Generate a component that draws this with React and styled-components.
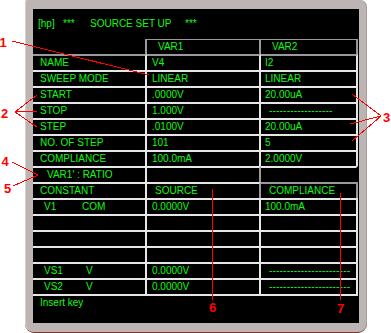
import React from 'react';
import styled, { createGlobalStyle } from 'styled-components';

const GREEN = '#12fa12';
const WHITE = '#e6e6e6';
const GRAY = '#9a9a9a';
const RED = '#ff0000';

const Global = createGlobalStyle`
  html, body { margin: 0; padding: 0; background: #ffffff; }
  body { font-family: "Liberation Sans", Arial, sans-serif; }
`;

const Page = styled.div`
  position: relative;
  width: 391px;
  height: 333px;
  overflow: hidden;
  padding-left: 25px;
  box-sizing: border-box;
`;

const Bezel = styled.div`
  width: 342px;
  height: 333px;
  box-sizing: border-box;
  padding: 9px 8px 10px 8px;
  background: #bdb4b4;
  border-radius: 2px 7px 9px 9px;
  border-bottom: 1px solid #7a3434;
  box-shadow: inset 1px 0 0 #d6d0d0, inset -1px 0 0 #a89e9e;
`;

const Screen = styled.div`
  width: 326px;
  height: 314px;
  background: #000;
  display: flex;
  flex-direction: column;
  color: ${GREEN};
  font-size: 10px;
`;

const Title = styled.div`
  height: 30px;
  box-sizing: border-box;
  padding: 9px 0 0 5px;
  display: flex;
  line-height: 12px;
  white-space: pre;
`;

const TitlePart = styled.span`
  width: ${p => (p.$w ? `${p.$w}px` : 'auto')};
`;

const Grid = styled.div`
  display: grid;
  grid-template-columns: 114px 114px 97px;
  grid-template-rows: 15px repeat(15, 16px);
`;

const borderTop = p => {
  if (p.$top === 'none') return '0';
  if (p.$top === 'thin') return `1px solid ${GRAY}`;
  return `2px solid ${p.$top === 'gray' ? GRAY : WHITE}`;
};

const borderRight = p => {
  if (p.$right === 'none') return '2px solid transparent';
  return `2px solid ${p.$right === 'gray' ? GRAY : WHITE}`;
};

const Cell = styled.div`
  box-sizing: border-box;
  border-top: ${borderTop};
  border-right: ${borderRight};
  padding-left: ${p => p.$pad ?? 0}px;
  line-height: 14px;
  white-space: pre;
  overflow: hidden;
  display: flex;
  letter-spacing: ${p => (p.$dash ? '0.2px' : 'normal')};
`;

const Sub = styled.span`
  width: ${p => p.$w}px;
  flex: none;
`;

const Footer = styled.div`
  width: 325px;
  border-top: 2px solid ${WHITE};
  padding: 1px 0 0 7px;
  line-height: 12px;
  box-sizing: border-box;
`;

const Overlay = styled.svg`
  position: absolute;
  left: 0;
  top: 0;
  pointer-events: none;
`;

const Num = styled.text`
  font-family: "Liberation Sans", Arial, sans-serif;
  font-weight: bold;
  font-size: 13px;
  fill: ${RED};
`;

const LBL = 7;
const V1P = 5;
const V2P = 4;

const rows = [
  { label: 'NAME', v1: 'V4', v2: 'I2', top: 'gray' },
  { label: 'SWEEP MODE', v1: 'LINEAR', v2: 'LINEAR' },
  { label: 'START', v1: '.0000V', v2: '20.00uA' },
  { label: 'STOP', v1: '1.000V', v2: '-'.repeat(18), v2pad: 8, dash: true },
  { label: 'STEP', v1: '.0100V', v2: '20.00uA' },
  { label: 'NO. OF STEP', v1: '101', v2: '5' },
  { label: 'COMPLIANCE', v1: '100.0mA', v2: '2.0000V' },
];

const lines = [
  [11.7, 41, 149, 75],
  [15, 112, 37, 95],
  [15, 112, 37, 111],
  [15, 112, 37, 127],
  [381, 116, 352, 94],
  [381, 116, 350, 124],
  [381, 116, 352, 141],
  [12, 162, 38, 175],
  [13, 186, 38, 175],
  [212.5, 189, 212.5, 300],
  [340.5, 193, 340.5, 300],
];

const nums = [
  ['1', 3, 47],
  ['2', 4.5, 118],
  ['3', 386.5, 122],
  ['4', 5, 166],
  ['5', 7.5, 193],
  ['6', 212.5, 312],
  ['7', 340.5, 313],
];

export default function App() {
  return (
    <Page>
      <Global />
      <Bezel>
        <Screen>
          <Title>
            <TitlePart $w={25}>[hp]</TitlePart>
            <TitlePart $w={27}>***</TitlePart>
            <TitlePart $w={95}>SOURCE SET UP</TitlePart>
            <TitlePart>***</TitlePart>
          </Title>
          <Grid>
            <Cell $top="none" $right="gray" />
            <Cell $top="thin" $right="gray" $pad={11}>VAR1</Cell>
            <Cell $top="thin" $right="gray" $pad={11}>VAR2</Cell>

            {rows.map(r => (
              <React.Fragment key={r.label}>
                <Cell $top={r.top} $pad={LBL}>{r.label}</Cell>
                <Cell $top={r.top} $pad={V1P}>{r.v1}</Cell>
                <Cell $top={r.top} $pad={r.v2pad ?? V2P} $dash={r.dash}>{r.v2}</Cell>
              </React.Fragment>
            ))}

            <Cell $pad={14}>VAR1' : RATIO</Cell>
            <Cell $right="gray" />
            <Cell $right="none" />

            <Cell $pad={LBL}>CONSTANT</Cell>
            <Cell $right="gray" $pad={8}>SOURCE</Cell>
            <Cell $top="gray" $right="gray" $pad={8}>COMPLIANCE</Cell>

            <Cell $pad={11}><Sub $w={38}>V1</Sub>COM</Cell>
            <Cell $pad={V1P}>0.0000V</Cell>
            <Cell $pad={V2P}>100.0mA</Cell>

            <Cell /><Cell /><Cell />
            <Cell /><Cell /><Cell />
            <Cell /><Cell /><Cell />

            <Cell $pad={11}><Sub $w={42}>VS1</Sub>V</Cell>
            <Cell $pad={V1P}>0.0000V</Cell>
            <Cell $pad={8} $dash>{'-'.repeat(23)}</Cell>

            <Cell $pad={11}><Sub $w={42}>VS2</Sub>V</Cell>
            <Cell $pad={V1P}>0.0000V</Cell>
            <Cell $pad={8} $dash>{'-'.repeat(23)}</Cell>
          </Grid>
          <Footer>Insert key</Footer>
        </Screen>
      </Bezel>
      <Overlay width="391" height="333" viewBox="0 0 391 333">
        {lines.map(([x1, y1, x2, y2], i) => (
          <line key={i} x1={x1} y1={y1} x2={x2} y2={y2} stroke={RED} strokeWidth="1" shapeRendering="crispEdges" />
        ))}
        {nums.map(([t, x, y]) => (
          <Num key={t} x={x} y={y} textAnchor="middle">{t}</Num>
        ))}
      </Overlay>
    </Page>
  );
}
